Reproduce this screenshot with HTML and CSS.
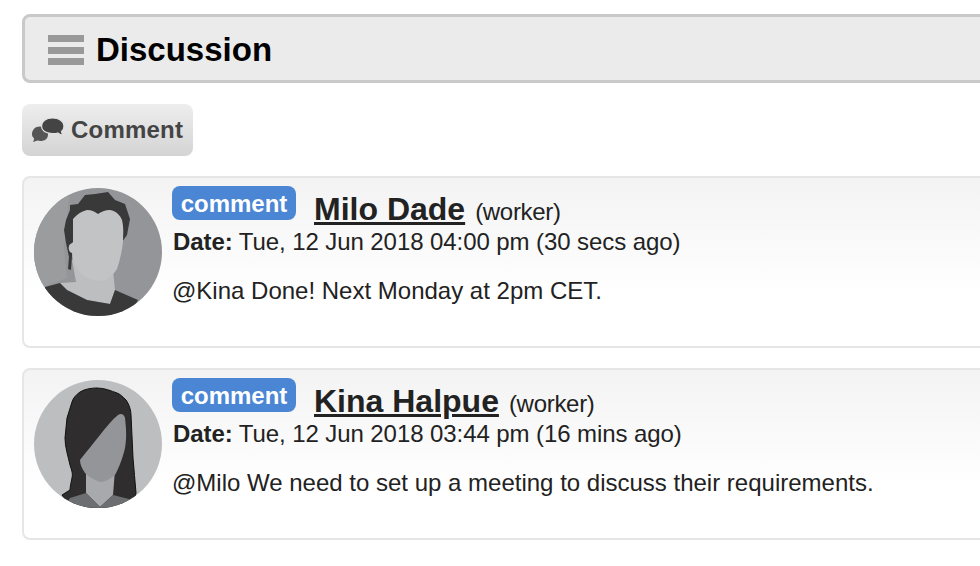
FILE: index.html
```html
<!DOCTYPE html>
<html lang="en">
<head>
    <meta charset="UTF-8">
    <meta name="viewport" content="width=device-width, initial-scale=1.0">
    <title>Discussion</title>
    <link rel="stylesheet" href="styles.css">
</head>
<body>
    <div class="page">
        <h1 class="section-title">
            <svg class="menu-icon" viewBox="0 0 36 30" aria-hidden="true">
                <rect width="36" height="7" y="0"></rect>
                <rect width="36" height="7" y="12"></rect>
                <rect width="36" height="7" y="23"></rect>
            </svg>
            Discussion
        </h1>

        <button class="comment-btn">
            <svg class="comment-icon" viewBox="0 0 32 24" aria-hidden="true">
                <path d="M0 16.500C0 12 3 8.500 8 8.500s8 3.500 8 8-3.500 6.500-7.500 6.500c-1 0-2 0-3-.400L1 24c.600-1 1.100-2.500 1.100-3.700C.8 19.300 0 18 0 16.500z"></path>
                <path class="bubble-front" d="M9.500 8C9.500 3.500 14 0 20.500 0S32 3.500 32 8c0 2.500-1 4.500-2.500 5.500.2 1.500 1 2.800 1.500 3.700-2 0-4-1-5.200-2.200-2 .6-3.800.8-5.800.6-6-.6-10.500-3.300-10.500-7.600z"></path>
            </svg>
            Comment
        </button>

        <div class="comment">
            <svg class="avatar" viewBox="0 0 128 128" aria-hidden="true">
                <defs>
                    <clipPath id="clip-man"><circle cx="64" cy="64" r="64"></circle></clipPath>
                    <clipPath id="clip-woman"><circle cx="64" cy="64" r="64"></circle></clipPath>
                </defs>
                <g clip-path="url(#clip-man)">
                    <rect width="128" height="128" fill="#939598"></rect>
                    <path fill="#9a9c9e" d="M0 0h36L30 60l3 30-33 12z"></path>
                    <path fill="#3a393a" d="M36 17l8-1 7-9 10-1 13-2 7 8 10 4 5 15-3 16-5 7H40l-2 14-1 14-3-1 1-12-3-14-2-13 2-10 4-10z"></path>
                    <path fill="#bcbec0" d="M38 72l4 22-16 1 7 7 20 10 23 4 5-14-3-30z"></path>
                    <path fill="#3a393a" d="M11 99l15-4 7 7 20 10 23 4 5-14 23 10-10 20H10z"></path>
                    <path fill="#c1c3c5" d="M39 31c4-5 9-8 14-9 5 0 8 2 11 4 3-2 7-4 12-4 6 1 10 5 12 10 2 8 1 15 1 22-1 9-3 18-6 27-4 6-9 11-15 12-7 0-14-2-19-6-5-4-9-10-10-15l-1-7c-2 0-4-3-3-7 1-3 3-2 4-4z"></path>
                </g>
            </svg>
            <div class="comment-body">
                <div class="comment-head">
                    <span class="badge">comment</span>
                    <a class="author" href="#">Milo Dade</a>
                    <span class="role">(worker)</span>
                </div>
                <div class="comment-date"><strong>Date:</strong> Tue, 12 Jun 2018 04:00 pm (30 secs ago)</div>
                <p class="comment-text">@Kina Done! Next Monday at 2pm CET.</p>
            </div>
        </div>

        <div class="comment">
            <svg class="avatar" viewBox="0 0 128 128" aria-hidden="true">
                <g clip-path="url(#clip-woman)">
                    <rect width="128" height="128" fill="#bcbec0"></rect>
                    <path fill="#2f2d2e" stroke="#111" stroke-width="1" d="M63 8c-6 0-12 1-17 4-4 3-7 6-8 10l-5 16-2 20c0 9 3 18 5 27 2 6 3 9 2 13-1 5-2 9-2 12l-8 5 10 13h60l4-15c-1-12-2-23-3-35l-2-43c0-5-2-11-5-15-3-3-6-6-9-7-6-2-12-5-20-5z"></path>
                    <path fill="#a7a9ac" d="M52 90v23l14 14 13-12 2-25z"></path>
                    <path fill="#6d6e71" d="M30 128l6-10 16-5 14 14 13-12 16 4 2 9z"></path>
                    <path fill="#939598" d="M84 35c3-2 6-1 7 3 1 9 2 19 0 30-2 9-6 20-10 27-5 4-10 7-15 7-6-2-11-5-15-9-3-4-5-9-5-13 6-8 13-16 20-25 6-8 12-15 18-20z"></path>
                </g>
            </svg>
            <div class="comment-body">
                <div class="comment-head">
                    <span class="badge">comment</span>
                    <a class="author" href="#">Kina Halpue</a>
                    <span class="role">(worker)</span>
                </div>
                <div class="comment-date"><strong>Date:</strong> Tue, 12 Jun 2018 03:44 pm (16 mins ago)</div>
                <p class="comment-text">@Milo We need to set up a meeting to discuss their requirements.</p>
            </div>
        </div>
    </div>
</body>
</html>
```

FILE: styles.css
```css
html, body {
    overflow: hidden;
}
body {
    margin: 0;
    background-color: #fff;
    color: #222;
    font-family: "Liberation Sans", Arial, sans-serif;
    font-size: 24px;
}
.page {
    width: 1000px;
    padding: 14px 0 0 22px;
}
.section-title {
    display: flex;
    align-items: center;
    gap: 12px;
    height: 69px;
    box-sizing: border-box;
    margin: 0 0 21px;
    padding: 3px 0 0 23px;
    border: 3px solid #c9c9c9;
    border-radius: 8px;
    background-color: #ebebeb;
    color: #000;
    font-size: 33px;
    font-weight: bold;
}
.menu-icon {
    width: 36px;
    height: 30px;
    fill: #999;
}
.comment-btn {
    display: flex;
    align-items: center;
    gap: 7px;
    width: 171px;
    height: 52px;
    margin-bottom: 20px;
    padding: 0 0 0 10px;
    border: none;
    border-radius: 8px;
    background: linear-gradient(#eeeeee, #d4d4d4);
    color: #444;
    font-family: inherit;
    font-size: 24px;
    font-weight: bold;
    letter-spacing: 0.2px;
}
.comment-icon {
    width: 32px;
    height: 24px;
    fill: #555;
}
.bubble-front {
    fill: #444;
    stroke: #e2e2e2;
    stroke-width: 1.2;
}
.comment {
    display: flex;
    gap: 10px;
    height: 172px;
    box-sizing: border-box;
    margin-bottom: 20px;
    padding: 10px;
    border: 2px solid #e6e6e6;
    border-radius: 8px;
    background: linear-gradient(#f3f3f3, #ffffff 70%);
}
.avatar {
    width: 128px;
    height: 128px;
    flex-shrink: 0;
}
.comment-body {
    margin-top: -2px;
}
.comment-head {
    display: flex;
    align-items: flex-end;
    height: 42px;
}
.badge {
    align-self: flex-start;
    width: 124px;
    height: 34px;
    margin-right: 18px;
    border-radius: 8px;
    background-color: #4a86d4;
    color: #fff;
    font-weight: bold;
    line-height: 36px;
    text-align: center;
}
.author {
    margin-right: 10px;
    color: #222;
    font-size: 32px;
    font-weight: bold;
    line-height: 38px;
}
.role {
    letter-spacing: -0.3px;
    line-height: 32px;
}
.comment-date {
    margin: -3px 0 0 1px;
    letter-spacing: -0.08px;
    line-height: 34px;
}
.comment-text {
    margin: 15px 0 0;
    line-height: 34px;
}
```
